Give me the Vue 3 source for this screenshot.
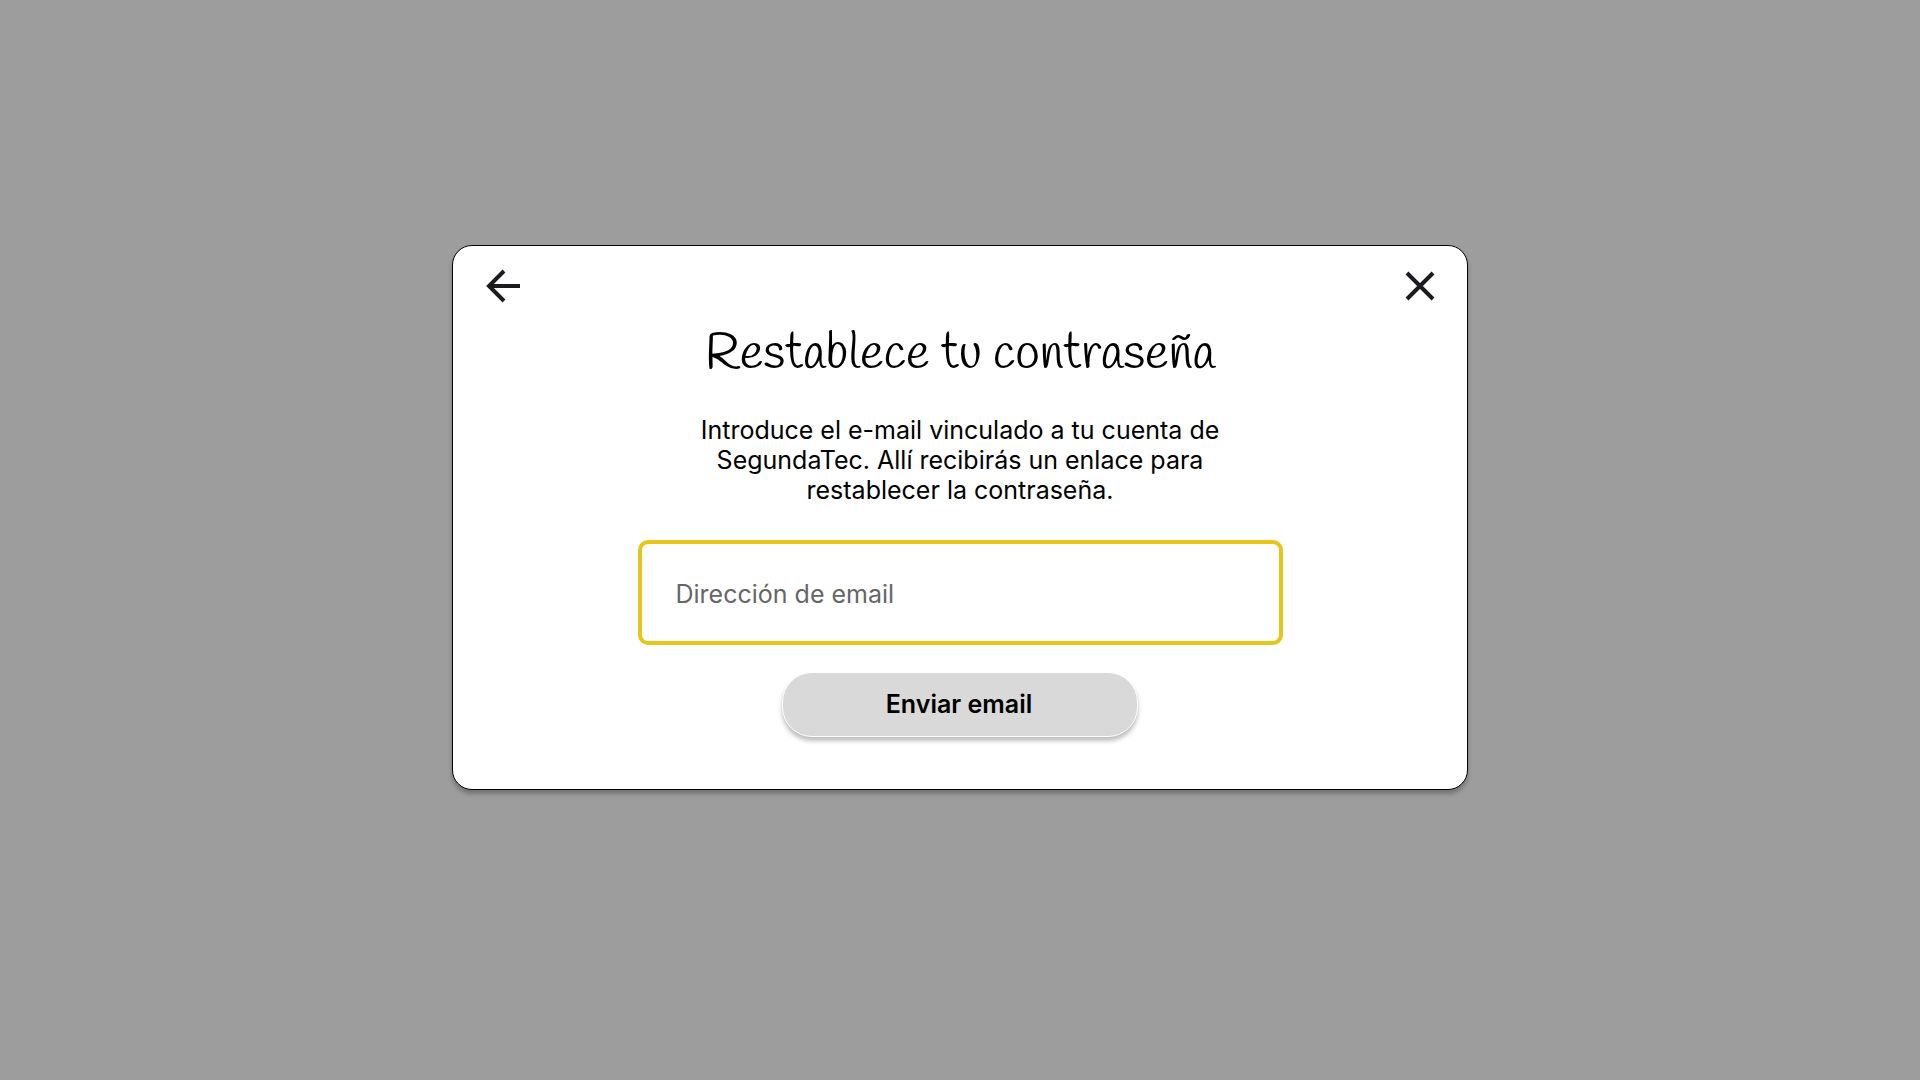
<script setup>
import { ref } from 'vue'

const email = ref('')
</script>

<template>
  <main class="backdrop">
    <section class="dialog" role="dialog" aria-modal="true" aria-labelledby="reset-title">
      <header class="toolbar">
        <button class="icon-button" type="button" aria-label="Volver">
          <svg viewBox="0 0 40 40" fill="none" stroke="#1d1b20" stroke-width="4">
            <path d="M37 20H6M21 5L6 20L21 35" />
          </svg>
        </button>
        <button class="icon-button" type="button" aria-label="Cerrar">
          <svg viewBox="0 0 40 40" fill="none" stroke="#1d1b20" stroke-width="4">
            <path d="M7 7L33 33M33 7L7 33" />
          </svg>
        </button>
      </header>
      <form class="form" @submit.prevent>
        <h1 id="reset-title" class="title">Restablece tu contraseña</h1>
        <p class="description">
          Introduce el e-mail vinculado a tu cuenta de SegundaTec. Allí recibirás un enlace para
          restablecer la contraseña.
        </p>
        <input
          v-model="email"
          class="field"
          type="email"
          placeholder="Dirección de email"
          aria-label="Dirección de email"
        />
        <button class="submit" type="submit">Enviar email</button>
      </form>
    </section>
  </main>
</template>

<style>
body {
  margin: 0;
  background: #9d9d9d;
}
</style>

<style scoped>
* {
  box-sizing: border-box;
}

.backdrop {
  display: flex;
  align-items: center;
  justify-content: center;
  min-height: 100vh;
  padding: 20px 20px 65px;
  font-family: Inter, "Liberation Sans", sans-serif;
  font-size: 25px;
  line-height: 30px;
  color: #000;
}

.dialog {
  width: 100%;
  max-width: 1016px;
  padding: 20px 27px 52px 30px;
  border: 1px solid #000;
  border-radius: 20px;
  background: #fff;
  box-shadow: 0 4px 4px rgba(0, 0, 0, 0.25);
}

.toolbar {
  display: flex;
  justify-content: space-between;
}

.icon-button {
  width: 40px;
  height: 40px;
  padding: 0;
  border: 0;
  background: none;
  cursor: pointer;
}

.icon-button svg {
  display: block;
  width: 40px;
  height: 40px;
}

.form {
  display: flex;
  flex-direction: column;
  align-items: center;
  padding-right: 3px;
}

.title {
  margin: 19px 0 30px;
  font-family: Handlee, Lato, cursive;
  font-size: 50px;
  font-weight: 400;
  line-height: 60px;
  text-align: center;
}

.description {
  max-width: 540px;
  margin: 0 0 35px;
  text-align: center;
}

.field {
  width: 100%;
  max-width: 645px;
  height: 105px;
  padding: 2px 34px 0;
  border: 4px solid #e6c619;
  border-radius: 10px;
  outline: none;
  background: #fff;
  color: #000;
  font: inherit;
}

.field::placeholder {
  color: #666;
  opacity: 1;
}

.submit {
  width: 100%;
  max-width: 356px;
  height: 65px;
  margin-top: 27px;
  padding: 0 2px 2px 0;
  border: 1px solid #fff;
  border-radius: 30px;
  background: #d9d9d9;
  box-shadow: 0 4px 4px rgba(0, 0, 0, 0.25);
  color: #000;
  font: inherit;
  font-weight: 600;
  cursor: pointer;
}
</style>
